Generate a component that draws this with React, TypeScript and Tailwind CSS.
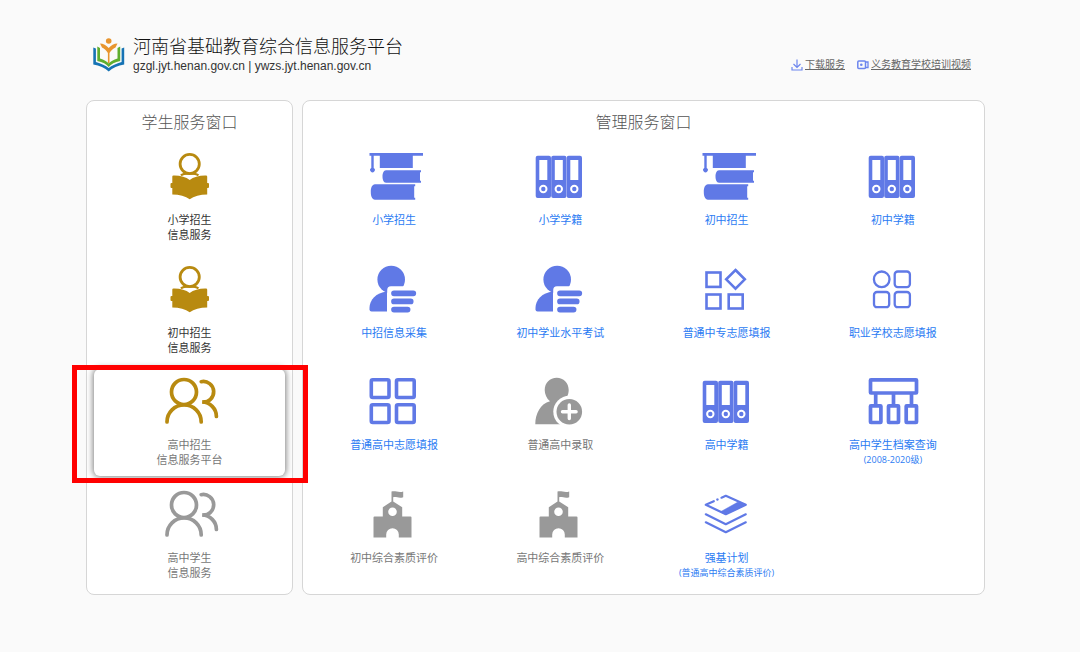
import type { ReactNode } from 'react';

type Tone = 'gold' | 'blue' | 'gray';

interface Service {
  icon: ReactNode;
  tone: Tone;
  lines: string[];
  note?: string;
  textClass: string;
  active?: boolean;
}

const toneClass: Record<Tone, string> = {
  gold: 'text-[#b88a10]',
  blue: 'text-[#6079e6]',
  gray: 'text-[#999999]',
};

function Logo() {
  return (
    <svg viewBox="0 0 32 34" className="w-8 h-[34px] shrink-0" fill="none" aria-hidden="true">
      <circle cx="15.7" cy="3" r="2.8" fill="#e8952e" />
      <path d="M7 5.500C10 5.500 13.500 7.500 15.700 10C18 7.500 21 5.500 24.500 5.500L22.500 9.500C20 10.500 18 12.500 16.500 15V25H14.900V15C13.400 12.500 11.500 10.500 9 9.500Z" fill="#e8952e" />
      <path d="M4.300 8.500L7 10V20.500C11 21.500 14 23.500 15.700 25.500C17.500 23.500 20.500 21.500 24.500 20.500V10L27.200 8.500V23C22 24 18 26 15.700 29C13.500 26 9.500 24 4.300 23Z" fill="#5fae2e" />
      <path d="M0.300 9.500L2.900 10.500V24C8 25.500 13 27.500 15.700 30C18.500 27.500 23.500 25.500 28.600 24V10.500L31.200 9.500V26.500C25 27.500 19.500 30 15.700 33.500C12 30 6.500 27.500 0.300 26.500Z" fill="#1673b4" />
    </svg>
  );
}

function Icon({ children }: { children: ReactNode }) {
  return (
    <svg viewBox="0 0 60 60" className="w-15 h-15 shrink-0" fill="none" aria-hidden="true">
      {children}
    </svg>
  );
}

const reader = (
  <Icon>
    <circle cx="29.700" cy="17" r="9.6" stroke="currentColor" strokeWidth="2.8" />
    <path d="M21 28.500C22.500 26.800 25 26.500 29.700 26.500S36.900 26.800 38.400 28.500" stroke="currentColor" strokeWidth="2.200" />
    <path d="M13.500 28.500C20 28.300 26 30 29.700 33C33.500 30 39.500 28.300 46 28.500Q47.200 28.500 47.200 29.500V36H48Q49 36 49 37V40Q49 41 48 41H47.200V47.500C40 47.700 34 49 29.700 52.300C25.500 49 19.500 47.700 12.300 47.500V41H11.500Q10.500 41 10.500 40V37Q10.500 36 11.500 36H12.300V29.500Q12.300 28.500 13.500 28.500Z" fill="currentColor" />
  </Icon>
);

const users = (
  <Icon>
    <g stroke="currentColor" strokeWidth="3.700" strokeLinecap="round">
      <circle cx="24" cy="20" r="12.500" />
      <path d="M7 50A17.100 17.100 0 0 1 41.200 50" />
      <path d="M41.200 9.700A10.300 10.300 0 1 1 42.200 30A14.500 14.500 0 0 1 56.400 44.500" />
    </g>
  </Icon>
);

const gradBooks = (
  <Icon>
    <g fill="currentColor">
      <path d="M5.500 6H59V8.700H48.800V21H15.800V8.700H9.700V21A2.300 2.300 0 1 1 7.300 21V8.700H5.500Z" />
      <path d="M22 23.300H57V25.300H56V33.700H57V35.700H22C19.500 35.700 18.500 32.500 18.500 29.500S19.500 23.300 22 23.300Z" />
      <path d="M11 37.300H51.200V39.300H50.200V50.700H51.200V52.700H11C8 52.700 6.800 49 6.800 45S8 37.300 11 37.300Z" />
    </g>
  </Icon>
);

const binders = (
  <Icon>
    {[5.7, 21.2, 36.7].map((x) => (
      <g key={x}>
        <rect x={x} y="8.700" width="15.300" height="42.300" rx="2" fill="currentColor" />
        <rect x={x + 3.6} y="13" width="8" height="20" fill="#fff" />
        <circle cx={x + 7.6} cy="42" r="3.200" fill="currentColor" stroke="#fff" strokeWidth="2" />
      </g>
    ))}
  </Icon>
);

const userList = (
  <Icon>
    <circle cx="27.200" cy="19.500" r="13.800" fill="currentColor" />
    <path d="M23 31.500C12 32.500 5.500 40 5.500 48V49.500Q5.500 51.500 7.500 51.500H23Z" fill="currentColor" />
    <path d="M23.200 55V30Q23.200 26.200 27 26.200H56V55Z" fill="#fff" />
    <path d="M30 33.300H49.300M30 41.400H46.700M30 49.600H43.600" stroke="currentColor" strokeWidth="5.700" strokeLinecap="round" />
  </Icon>
);

const shapesDiamond = (
  <Icon>
    <g stroke="currentColor" strokeWidth="2.600">
      <rect x="9.500" y="12.500" width="14" height="14.400" />
      <rect x="9.500" y="34.500" width="14" height="14" />
      <rect x="31.700" y="34.500" width="14" height="14" />
      <path d="M38.500 10L47.800 19.300L38.500 28.600L29.200 19.300Z" />
    </g>
  </Icon>
);

const shapesCircle = (
  <Icon>
    <g stroke="currentColor" strokeWidth="2.300">
      <circle cx="18.700" cy="19.300" r="7.800" />
      <rect x="31.700" y="11.500" width="15.200" height="15.600" rx="3" />
      <rect x="11" y="32" width="15.200" height="15.200" rx="3" />
      <rect x="31.700" y="32" width="15.200" height="15.200" rx="3" />
    </g>
  </Icon>
);

const fourSquares = (
  <Icon>
    <g stroke="currentColor" strokeWidth="3.600">
      <rect x="7.300" y="7.800" width="17.700" height="17.700" rx="1.500" />
      <rect x="32.500" y="7.800" width="17.700" height="17.700" rx="1.500" />
      <rect x="7.300" y="32.800" width="17.700" height="17.700" rx="1.500" />
      <rect x="32.500" y="32.800" width="17.700" height="17.700" rx="1.500" />
    </g>
  </Icon>
);

const userAdd = (
  <Icon>
    <path d="M26.700 5.800C33.500 5.800 38.700 11 38.700 18C38.700 23 36 27.500 33 29.500V52.200H5.300C5.300 42 10.500 31.500 20 29.300C16.500 26.500 14.700 22 14.700 18C14.700 11 19.900 5.800 26.700 5.800Z" fill="currentColor" />
    <circle cx="39.300" cy="39.700" r="16" fill="#fff" />
    <circle cx="39.300" cy="39.700" r="12.800" fill="currentColor" />
    <path d="M32.500 39.700H46.100M39.300 32.900V46.500" stroke="#fff" strokeWidth="3.400" strokeLinecap="round" />
  </Icon>
);

const orgChart = (
  <Icon>
    <g stroke="currentColor" strokeWidth="3.700">
      <rect x="7.500" y="7.800" width="46" height="13.200" rx="0.500" />
      <path d="M12.700 21V33M30.500 21V33M48.500 21V33" />
      <rect x="7.500" y="33.800" width="10.400" height="16.700" rx="0.500" />
      <rect x="25.500" y="33.800" width="10" height="16.700" rx="0.500" />
      <rect x="43.200" y="33.800" width="10.300" height="16.700" rx="0.500" />
    </g>
  </Icon>
);

const school = (
  <Icon>
    <path
      fill="currentColor"
      fillRule="evenodd"
      d="M27.500 6.500C31.500 5.500 34.500 8 39.200 6.500V12.200C35 13.700 32.500 11.500 29.200 12.200V16.500L38.200 22.200V31.500H46.500Q47.500 31.500 47.500 32.500V52.500H34.800V49.500A6.300 6.300 0 0 0 22.200 49.500V52.500H9.500V32.500Q9.500 31.500 10.500 31.500H18.800V22.200L27.500 16.500ZM28.500 22.500A4.300 4.300 0 1 0 28.500 31.100A4.300 4.300 0 1 0 28.500 22.500Z"
    />
  </Icon>
);

const layers = (
  <Icon>
    <g stroke="currentColor" strokeWidth="2.200" strokeLinecap="round" strokeLinejoin="round">
      <path d="M24.500 12.700L28.800 10.800L48.800 19.800L28.800 29.200L8.800 19.800L16.800 16.200M20.300 14.600L20.600 14.500" />
      <path d="M8.800 29.300L28.800 39.200L48.800 29.300M8.800 37.300L28.800 47.200L48.800 37.300" />
      <path d="M24 26.500L41 17L48.800 19.800L28.800 29.200Z" fill="currentColor" strokeWidth="0.500" />
    </g>
  </Icon>
);

const dark = 'text-[#333333]';
const muted = 'text-[#777777]';
const link = 'text-[#2b7bf3]';

const studentServices: Service[] = [
  { icon: reader, tone: 'gold', lines: ['小学招生', '信息服务'], textClass: dark },
  { icon: reader, tone: 'gold', lines: ['初中招生', '信息服务'], textClass: dark },
  { icon: users, tone: 'gold', lines: ['高中招生', '信息服务平台'], textClass: muted, active: true },
  { icon: users, tone: 'gray', lines: ['高中学生', '信息服务'], textClass: muted },
];

const adminServices: Service[] = [
  { icon: gradBooks, tone: 'blue', lines: ['小学招生'], textClass: link },
  { icon: binders, tone: 'blue', lines: ['小学学籍'], textClass: link },
  { icon: gradBooks, tone: 'blue', lines: ['初中招生'], textClass: link },
  { icon: binders, tone: 'blue', lines: ['初中学籍'], textClass: link },
  { icon: userList, tone: 'blue', lines: ['中招信息采集'], textClass: link },
  { icon: userList, tone: 'blue', lines: ['初中学业水平考试'], textClass: link },
  { icon: shapesDiamond, tone: 'blue', lines: ['普通中专志愿填报'], textClass: link },
  { icon: shapesCircle, tone: 'blue', lines: ['职业学校志愿填报'], textClass: link },
  { icon: fourSquares, tone: 'blue', lines: ['普通高中志愿填报'], textClass: link },
  { icon: userAdd, tone: 'gray', lines: ['普通高中录取'], textClass: muted },
  { icon: binders, tone: 'blue', lines: ['高中学籍'], textClass: link },
  { icon: orgChart, tone: 'blue', lines: ['高中学生档案查询'], note: '(2008-2020级)', textClass: link },
  { icon: school, tone: 'gray', lines: ['初中综合素质评价'], textClass: muted },
  { icon: school, tone: 'gray', lines: ['高中综合素质评价'], textClass: muted },
  { icon: layers, tone: 'blue', lines: ['强基计划'], note: '(普通高中综合素质评价)', textClass: link },
];

function ServiceTile({ service }: { service: Service }) {
  return (
    <a
      href="#"
      className={`relative flex flex-col items-center pt-[3px] rounded-md ${
        service.active ? 'bg-white shadow-[0_0_6px_1px_rgba(0,0,0,0.5)]' : ''
      }`}
    >
      <span className={toneClass[service.tone]}>{service.icon}</span>
      <span className={`mt-[6px] text-center text-[11px] leading-[15px] font-normal whitespace-nowrap ${service.textClass}`}>
        {service.lines.map((line) => (
          <span key={line} className="block">
            {line}
          </span>
        ))}
        {service.note && (
          <span className="block text-[9px] leading-[13px] font-['Open_Sans','Noto_Sans_CJK_SC',sans-serif]">
            {service.note}
          </span>
        )}
      </span>
      {service.active && (
        <span className="absolute z-10 -left-[22px] -right-[23px] -top-1 -bottom-[7px] border-5 border-[#ff0000] pointer-events-none" />
      )}
    </a>
  );
}

function Panel({ title, className, children }: { title: string; className: string; children: ReactNode }) {
  return (
    <section className={`bg-white border border-[#d6d6d6] rounded-lg pb-1.5 ${className}`}>
      <h2 className="h-[43px] flex items-center justify-center text-base text-[#555555]">{title}</h2>
      {children}
    </section>
  );
}

export default function App() {
  return (
    <div className="min-h-screen bg-[#fafafa] pl-[86px] pr-[95px] font-light font-['Liberation_Sans','Noto_Sans_CJK_SC',sans-serif]">
      <header className="h-[100px] flex items-start justify-between pl-[7px] pr-[14px] pt-9">
        <div className="flex items-center gap-2">
          <Logo />
          <div>
            <h1 className="text-lg leading-[22px] text-[#111111]">河南省基础教育综合信息服务平台</h1>
            <p className="text-xs leading-[16px] font-normal text-[#333333]">
              gzgl.jyt.henan.gov.cn | ywzs.jyt.henan.gov.cn
            </p>
          </div>
        </div>
        <nav className="flex gap-3 mt-5 text-[10px] leading-[18px] font-normal text-[#666666]">
          <a href="#" className="flex items-center gap-0.5">
            <svg viewBox="0 0 12 12" className="w-3 h-3" fill="none" stroke="#6d86ee" aria-hidden="true">
              <path d="M6 0.500V8.500M2.500 5L6 8.500L9.500 5M1 8V11H11V8" strokeWidth="1.200" />
            </svg>
            <span className="underline">下载服务</span>
          </a>
          <a href="#" className="flex items-center gap-0.5">
            <svg viewBox="0 0 12 12" className="w-3 h-3" fill="none" stroke="#6d86ee" aria-hidden="true">
              <rect x="0.800" y="2" width="7.700" height="7.500" rx="1" strokeWidth="1.500" />
              <path d="M8.500 3H11V8.500H8.500" strokeWidth="1.300" />
              <circle cx="4.300" cy="5.700" r="1.300" fill="#6d86ee" stroke="none" />
            </svg>
            <span className="underline">义务教育学校培训视频</span>
          </a>
        </nav>
      </header>

      <main className="flex gap-[9px]">
        <Panel title="学生服务窗口" className="w-[207px] shrink-0 px-[7px]">
          <div className="grid grid-rows-4 gap-1.5 h-[444px]">
            {studentServices.map((service) => (
              <ServiceTile key={service.lines.join('')} service={service} />
            ))}
          </div>
        </Panel>
        <Panel title="管理服务窗口" className="flex-1 px-2">
          <div className="grid grid-cols-4 grid-rows-4 gap-y-1.5 h-[444px]">
            {adminServices.map((service) => (
              <ServiceTile key={service.lines.join('')} service={service} />
            ))}
          </div>
        </Panel>
      </main>
    </div>
  );
}
